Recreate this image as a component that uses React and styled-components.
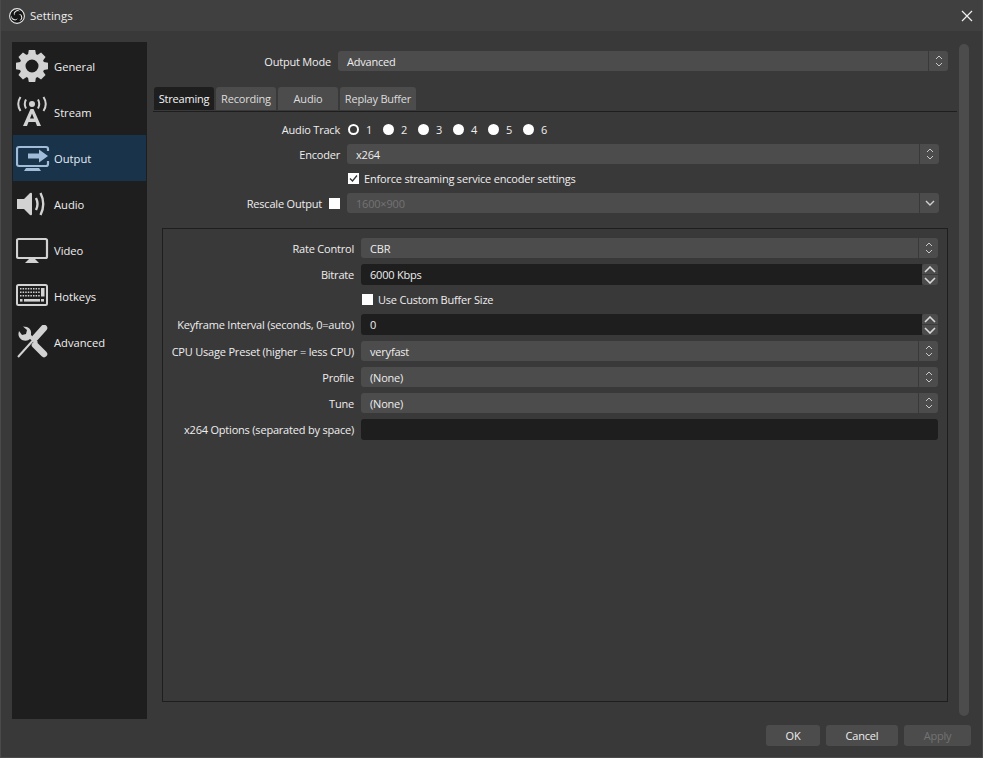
import styled, { createGlobalStyle } from 'styled-components';

const GlobalStyle = createGlobalStyle`
    html, body { margin: 0; padding: 0; background: #3a393a; }
    * { box-sizing: border-box; }
`;

//the whole settings window
const Win = styled.div`
    width: 983px;
    height: 758px;
    display: flex;
    flex-direction: column;
    background: #3a393a;
    border: 1px solid #4a4a4a;
    border-top: none;
    color: #eeeeee;
    font-family: 'Open Sans', 'Liberation Sans', sans-serif;
    font-size: 11px;
    letter-spacing: -0.2px;
    overflow: hidden;
`;
const TitleBar = styled.div`
    height: 31px;
    flex: none;
    display: flex;
    align-items: center;
    padding: 0 9px 0 8px;
    background: #404040;
    font-size: 11.5px;
    letter-spacing: 0;
    gap: 5px;
`;
const TitleText = styled.span`
    flex: 1;
`;
const Body = styled.div`
    flex: 1;
    display: flex;
    padding: 11px 11px 0 11px;
    min-height: 0;
`;
const Sidebar = styled.nav`
    width: 135px;
    height: 677px;
    flex: none;
    background: #1f1e1f;
    padding: 1px;
`;
const NavItem = styled.div`
    height: 46px;
    display: flex;
    align-items: center;
    gap: 4px;
    padding-left: 3px;
    font-size: 11.2px;
    letter-spacing: 0;
    background: ${(props) => (props.active ? '#19334b' : 'transparent')};
    color: ${(props) => (props.active ? '#e4edf5' : '#eeeeee')};
`;
const Main = styled.div`
    flex: 1;
    display: flex;
    min-width: 0;
`;
const Content = styled.div`
    width: 804px;
    margin-left: 6px;
    padding-right: 9px;
    flex: none;
`;
const ScrollTrack = styled.div`
    width: 10px;
    height: 672px;
    margin: 2px 0 0 2px;
    flex: none;
    background: #4c4c4c;
    border-radius: 5px;
`;
const Row = styled.div`
    display: flex;
    align-items: center;
    height: ${(props) => props.h || 20}px;
    margin-top: ${(props) => props.mt || 0}px;
    margin-right: ${(props) => props.mr || 0}px;
`;
const Label = styled.div`
    width: ${(props) => props.w}px;
    flex: none;
    text-align: right;
    padding-right: ${(props) => props.pr ?? 7}px;
    white-space: nowrap;
`;
const Select = styled.div`
    flex: 1;
    height: 100%;
    display: flex;
    align-items: center;
    background: #4c4c4c;
    border-radius: 3px;
    color: ${(props) => (props.disabled ? '#737373' : '#eeeeee')};
`;
const SelectValue = styled.div`
    flex: 1;
    padding-left: 9px;
`;
const ArrowZone = styled.div`
    width: 20px;
    height: 100%;
    display: flex;
    flex: none;
    align-items: center;
    justify-content: center;
    border-left: 1px solid #3a393a;
`;
const SpinWrap = styled.div`
    flex: 1;
    height: 100%;
    display: flex;
    background: #1f1e1f;
    border-radius: 3px;
    padding-left: 9px;
    align-items: center;
`;
const SpinValue = styled.div`
    flex: 1;
`;
const SpinButtons = styled.div`
    width: 16px;
    height: 100%;
    flex: none;
    display: flex;
    flex-direction: column;
    gap: 1px;
    background: #3a393a;
`;
const SpinButton = styled.div`
    flex: 1;
    display: flex;
    align-items: center;
    justify-content: center;
    background: #4c4c4c;
    border-radius: ${(props) => (props.up ? '3px 3px 0 0' : '0 0 3px 3px')};
`;
const TextInput = styled.div`
    flex: 1;
    height: 100%;
    background: #1f1e1f;
    border-radius: 3px;
`;
const Tabs = styled.div`
    display: flex;
    gap: 2px;
    height: 25px;
    margin: 16px -9px 0 0;
    padding-left: 1px;
    border-bottom: 1px solid #1f1e1f;
`;
const Tab = styled.div`
    width: ${(props) => props.w}px;
    height: 23px;
    display: flex;
    align-items: center;
    justify-content: center;
    border-radius: 3px 3px 0 0;
    background: ${(props) => (props.active ? '#1f1e1f' : '#4c4c4c')};
    color: ${(props) => (props.active ? '#f4f4f4' : '#dddddd')};
`;
const Radios = styled.div`
    display: flex;
    align-items: center;
    margin-left: 1px;
`;
const RadioItem = styled.div`
    width: 35px;
    display: flex;
    align-items: center;
    gap: 7px;
`;
const RadioDot = styled.span`
    width: 11px;
    height: 11px;
    border-radius: 50%;
    flex: none;
    background: ${(props) => (props.checked ? 'transparent' : '#fefefe')};
    border: ${(props) => (props.checked ? '2.5px solid #fefefe' : 'none')};
`;
const Check = styled.span`
    width: 11px;
    height: 11px;
    flex: none;
    display: flex;
    align-items: center;
    justify-content: center;
    background: #fefefe;
    margin-left: ${(props) => props.ml || 0}px;
`;
const CheckText = styled.span`
    margin-left: 5px;
`;
const Group = styled.div`
    height: 474px;
    margin: 15px 0 0 9px;
    border: 1px solid #1f1e1f;
    padding: 9px 9px 0 0;
`;
const Footer = styled.div`
    height: 38px;
    flex: none;
    display: flex;
    justify-content: flex-end;
    gap: 6px;
    padding: 6px 11px 0 0;
`;
const Button = styled.div`
    width: ${(props) => props.w}px;
    height: 21px;
    display: flex;
    align-items: center;
    justify-content: center;
    background: #4c4c4c;
    border-radius: 3px;
    color: ${(props) => (props.disabled ? '#737373' : '#eeeeee')};
`;

//arrows of the combo boxes and spin boxes
function UpDown() {
    return (
        <svg width='10' height='14' viewBox='0 0 10 14' fill='none' stroke='#c8c8c8' strokeWidth='1'>
            <path d='M2 5 L5 2 L8 5' />
            <path d='M2 9 L5 12 L8 9' />
        </svg>
    );
}
function Down() {
    return (
        <svg width='10' height='6' viewBox='0 0 10 6' fill='none' stroke='#d0d0d0' strokeWidth='1.4'>
            <path d='M1 1 L5 5 L9 1' />
        </svg>
    );
}
function SpinArrow({ up }) {
    return (
        <svg width='12' height='7' viewBox='0 0 12 7' fill='none' stroke='#d8d8d8' strokeWidth='1.6'>
            <path d={up ? 'M1 6 L6 1 L11 6' : 'M1 1 L6 6 L11 1'} />
        </svg>
    );
}

function ObsLogo() {
    return (
        <svg width='16' height='16' viewBox='0 0 16 16'>
            <circle cx='8' cy='8' r='7.4' fill='#151515' stroke='#e8e8e8' strokeWidth='1.1' />
            {[0, 120, 240].map((a) => (
                <path
                    key={a}
                    d='M11 3.6 A3.3 3.3 0 1 0 5.6 7.6 A3.6 3.6 0 0 1 11 3.6Z'
                    fill='#e8e8e8'
                    transform={`rotate(${a} 8 8)`}
                />
            ))}
        </svg>
    );
}

const ICON = '#d2d2d2';
const ICON_ACTIVE = '#a1bcd8';

function GearIcon() {
    return (
        <svg width='34' height='34' viewBox='0 0 34 34'>
            {[0, 45, 90, 135, 180, 225, 270, 315].map((a) => (
                <path key={a} d='M12.8 1 H19.2 L20.4 8 H11.6Z' fill={ICON} transform={`rotate(${a} 16 17)`} />
            ))}
            <circle cx='16' cy='17' r='9.5' fill='none' stroke={ICON} strokeWidth='6' />
        </svg>
    );
}
function StreamIcon() {
    return (
        <svg width='34' height='34' viewBox='0 0 34 34' fill='none' stroke={ICON}>
            <circle cx='16' cy='9' r='3' fill={ICON} stroke='none' />
            <path d='M10 4.5 Q7.5 9 10 13.5 M22 4.5 Q24.5 9 22 13.5' strokeWidth='2' />
            <path d='M4.5 2 Q0 9 4.5 16 M27.5 2 Q32 9 27.5 16' strokeWidth='2' />
            <path d='M14.5 14 H17.5 L25 31 H21 L19.5 27 H12.5 L11 31 H7Z M14 23.5 H18 L16 18.5Z' fill={ICON} stroke='none' fillRule='evenodd' />
        </svg>
    );
}
function OutputIcon() {
    return (
        <svg width='34' height='34' viewBox='0 0 34 34' fill='none'>
            <path d='M29 6 H3 Q1 6 1 8 V23 Q1 25 3 25 H30 Q32 25 32 23 V20' stroke={ICON_ACTIVE} strokeWidth='2.2' />
            <path d='M28 6 H30 Q32 6 32 8 V10' stroke={ICON_ACTIVE} strokeWidth='2.2' />
            <path d='M10 27 L8 30 H25 L23 27Z' fill={ICON_ACTIVE} />
            <path d='M12 12.5 H23 V8.5 L32 15 L23 21.5 V17.5 H12Z' fill={ICON_ACTIVE} />
        </svg>
    );
}
function AudioIcon() {
    return (
        <svg width='34' height='34' viewBox='0 0 34 34' fill='none' stroke={ICON}>
            <path d='M1 12 H8 L14 6 Q16 5 16 7 V27 Q16 29 14 28 L8 22 H1Z' fill={ICON} stroke='none' />
            <path d='M20 11 Q23 17 20 23' strokeWidth='2.4' />
            <path d='M24.5 6 Q30 17 24.5 28' strokeWidth='2.4' />
        </svg>
    );
}
function VideoIcon() {
    return (
        <svg width='34' height='34' viewBox='0 0 34 34' fill='none'>
            <rect x='1' y='6' width='30' height='19' rx='1.5' stroke={ICON} strokeWidth='2.2' />
            <path d='M13 26 L9 30 H23 L19 26Z' fill={ICON} />
        </svg>
    );
}
function HotkeysIcon() {
    const keys = [];
    for (let i = 0; i < 8; i++) {
        keys.push(<rect key={'a' + i} x={4 + i * 2.6} y='9' width='1.5' height='1.5' fill={ICON} />);
        keys.push(<rect key={'b' + i} x={4 + i * 2.6} y='12.5' width='1.5' height='1.5' fill={ICON} />);
        keys.push(<rect key={'c' + i} x={4 + i * 2.6} y='16' width='1.5' height='1.5' fill={ICON} />);
    }
    return (
        <svg width='34' height='34' viewBox='0 0 34 34' fill='none'>
            <rect x='1' y='6' width='30' height='20' rx='1.5' stroke={ICON} strokeWidth='2' />
            {keys}
            <rect x='8' y='20' width='16' height='2.6' fill={ICON} />
            <rect x='4' y='20' width='2.5' height='2.6' fill={ICON} />
            <rect x='25' y='20' width='3' height='2.6' fill={ICON} />
            <rect x='25' y='9' width='3.5' height='8.5' fill={ICON} />
        </svg>
    );
}
function AdvancedIcon() {
    return (
        <svg width='34' height='34' viewBox='0 0 34 34' fill='none'>
            <path d='M28 3 L19 13' stroke={ICON} strokeWidth='6.5' strokeLinecap='round' />
            <path d='M20 12 L2 32' stroke={ICON} strokeWidth='2' />
            <path d='M19 20 L28 29' stroke={ICON} strokeWidth='6.5' strokeLinecap='round' />
            <path d='M3 6 Q1 12 6 15 Q11 17 14 14 L20 19 L22 17 L15 10 Q16 4 11 2 L7 1.5 L11 5 L10 9 L6 10Z' fill={ICON} />
        </svg>
    );
}

const navItems = [
    { name: 'General', Icon: GearIcon },
    { name: 'Stream', Icon: StreamIcon },
    { name: 'Output', Icon: OutputIcon, active: true },
    { name: 'Audio', Icon: AudioIcon },
    { name: 'Video', Icon: VideoIcon },
    { name: 'Hotkeys', Icon: HotkeysIcon },
    { name: 'Advanced', Icon: AdvancedIcon },
];

function ComboBox({ value, disabled, single }) {
    return (
        <Select disabled={disabled}>
            <SelectValue>{value}</SelectValue>
            <ArrowZone>{single ? <Down /> : <UpDown />}</ArrowZone>
        </Select>
    );
}
function SpinBox({ value }) {
    return (
        <SpinWrap>
            <SpinValue>{value}</SpinValue>
            <SpinButtons>
                <SpinButton up>
                    <SpinArrow up />
                </SpinButton>
                <SpinButton>
                    <SpinArrow />
                </SpinButton>
            </SpinButtons>
        </SpinWrap>
    );
}

export default function App() {
    return (
        <Win>
            <GlobalStyle />
            <TitleBar>
                <ObsLogo />
                <TitleText>Settings</TitleText>
                <svg width='12' height='12' viewBox='0 0 12 12' stroke='#f0f0f0' strokeWidth='1.2'>
                    <path d='M1 1 L11 11 M11 1 L1 11' />
                </svg>
            </TitleBar>
            <Body>
                <Sidebar>
                    {navItems.map(({ name, Icon, active }) => (
                        <NavItem key={name} active={active}>
                            <Icon />
                            {name}
                        </NavItem>
                    ))}
                </Sidebar>
                <Main>
                    <Content>
                        <Row mt={9}>
                            <Label w={185}>Output Mode</Label>
                            <ComboBox value='Advanced' />
                        </Row>
                        <Tabs>
                            <Tab w={60} active>Streaming</Tab>
                            <Tab w={60}>Recording</Tab>
                            <Tab w={60}>Audio</Tab>
                            <Tab w={76}>Replay Buffer</Tab>
                        </Tabs>
                        <Row mt={8} h={19} mr={9}>
                            <Label w={194}>Audio Track</Label>
                            <Radios>
                                {[1, 2, 3, 4, 5, 6].map((n) => (
                                    <RadioItem key={n}>
                                        <RadioDot checked={n === 1} />
                                        {n}
                                    </RadioItem>
                                ))}
                            </Radios>
                        </Row>
                        <Row mt={5} mr={9}>
                            <Label w={194}>Encoder</Label>
                            <ComboBox value='x264' />
                        </Row>
                        <Row mt={4} h={21} mr={9}>
                            <Label w={194} pr={0} />
                            <Check ml={1}>
                                <svg width='9' height='9' viewBox='0 0 9 9' fill='none' stroke='#333' strokeWidth='1.3'>
                                    <path d='M1 4.5 L3.5 7 L8 1.5' />
                                </svg>
                            </Check>
                            <CheckText>Enforce streaming service encoder settings</CheckText>
                        </Row>
                        <Row mt={4} mr={9}>
                            <Label w={176}>Rescale Output</Label>
                            <Check />
                            <Label w={7} pr={0} />
                            <ComboBox value='1600×900' disabled single />
                        </Row>
                        <Group>
                            <Row>
                                <Label w={198}>Rate Control</Label>
                                <ComboBox value='CBR' />
                            </Row>
                            <Row mt={6} h={21}>
                                <Label w={198}>Bitrate</Label>
                                <SpinBox value='6000 Kbps' />
                            </Row>
                            <Row mt={4} h={21}>
                                <Label w={199} pr={0} />
                                <Check />
                                <CheckText>Use Custom Buffer Size</CheckText>
                            </Row>
                            <Row mt={4} h={21}>
                                <Label w={198}>Keyframe Interval (seconds, 0=auto)</Label>
                                <SpinBox value='0' />
                            </Row>
                            <Row mt={6}>
                                <Label w={198}>CPU Usage Preset (higher = less CPU)</Label>
                                <ComboBox value='veryfast' />
                            </Row>
                            <Row mt={6}>
                                <Label w={198}>Profile</Label>
                                <ComboBox value='(None)' />
                            </Row>
                            <Row mt={6}>
                                <Label w={198}>Tune</Label>
                                <ComboBox value='(None)' />
                            </Row>
                            <Row mt={6} h={21}>
                                <Label w={198}>x264 Options (separated by space)</Label>
                                <TextInput />
                            </Row>
                        </Group>
                    </Content>
                    <ScrollTrack />
                </Main>
            </Body>
            <Footer>
                <Button w={54}>OK</Button>
                <Button w={72}>Cancel</Button>
                <Button w={67} disabled>Apply</Button>
            </Footer>
        </Win>
    );
}
